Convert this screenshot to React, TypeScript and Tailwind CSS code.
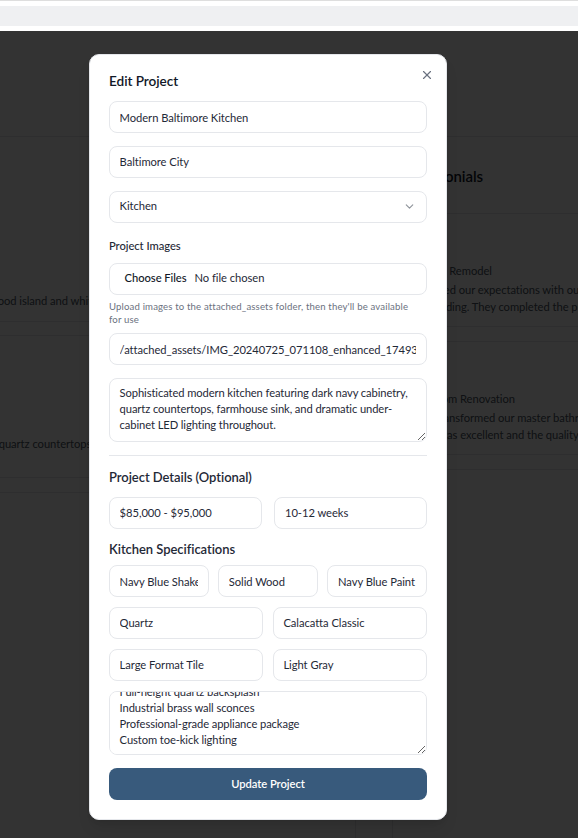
import { useEffect, useRef } from "react";
import { X, ChevronDown } from "lucide-react";

const FONT = "font-['Lato','Noto_Sans',sans-serif] tracking-[-0.05px]";
const inputCls =
  "block h-[32px] w-full rounded-[8px] border border-[#e5e7eb] bg-white px-[9.6px] text-[11.2px] text-[#1f2937] outline-none";
const areaCls =
  "block h-[64px] w-full rounded-[8px] border border-[#e5e7eb] bg-white px-[9.6px] py-[6.4px] text-[11.2px] leading-[16px] tracking-[-0.1px] text-[#1f2937] outline-none";

function Field({ value, className = "" }: { value: string; className?: string }) {
  return <input readOnly defaultValue={value} className={`${inputCls} ${className}`} />;
}

function Background() {
  return (
    <div className="relative h-[807px] overflow-hidden bg-white">
      <div className="h-[106px] border-b border-[#e5e7eb]" />
      <div className="flex">
        <div className="ml-[-54px] w-[410px] shrink-0">
          <div className="h-[185px] rounded-b-[8px] border border-t-0 border-[#e5e7eb] px-4">
            <div className="h-[156px]" />
            <p className="whitespace-nowrap text-[11.2px] text-[#4b5563]">
              Dark wood island and white oak cabinetry with brass hardware.
            </p>
          </div>
          <div className="mt-[13px] h-[143px] rounded-[8px] border border-[#e5e7eb] px-4">
            <div className="h-[100px]" />
            <p className="whitespace-nowrap text-[11.2px] text-[#4b5563]">
              Honed quartz countertops with a double vanity and heated floors.
            </p>
          </div>
          <div className="mt-[14px] h-[400px] rounded-[8px] border border-[#e5e7eb]" />
        </div>
        <div className="ml-[36px] w-[400px] shrink-0">
          <h2 className="mt-[32px] pl-[10px] text-[15px] font-semibold leading-none text-[#111827]">Testimonials</h2>
          <div className="mt-[29px] h-[114px] rounded-[8px] border border-[#e5e7eb] px-4 pt-[48px] text-[11.2px] leading-[17px] text-[#4b5563]">
            <p className="whitespace-nowrap">Kitchen Remodel</p>
            <p className="mt-[2px] whitespace-nowrap">Exceeded our expectations with our kitchen remodel.</p>
            <p className="whitespace-nowrap">outstanding. They completed the project on time.</p>
          </div>
          <div className="mt-[14px] h-[114px] rounded-[8px] border border-[#e5e7eb] px-4 pt-[48px] text-[11.2px] leading-[17px] text-[#4b5563]">
            <p className="whitespace-nowrap">Bathroom Renovation</p>
            <p className="mt-[2px] whitespace-nowrap">They transformed our master bathroom into a spa.</p>
            <p className="whitespace-nowrap">Work was excellent and the quality is superb.</p>
          </div>
          <div className="mt-[14px] h-[400px] rounded-[8px] border border-[#e5e7eb]" />
        </div>
      </div>
      <div className="absolute inset-0 bg-black/80" />
    </div>
  );
}

export default function App() {
  const specRef = useRef<HTMLTextAreaElement>(null);
  useEffect(() => {
    if (specRef.current) specRef.current.scrollTop = 10000;
  }, []);

  return (
    <div className={`relative h-[838px] w-[578px] overflow-hidden bg-white ${FONT}`}>
      <div className="h-[31px] border-t border-[#dedede] bg-white pt-[5px]">
        <div className="h-[20px] bg-[#eff0f2]" />
      </div>
      <Background />

      <div className="absolute left-[89px] top-[54px] w-[358px] rounded-[10px] border border-[#e5e7eb] bg-white px-[19px] pb-[19px] pt-[19px] shadow-lg">
        <button className="absolute right-[12px] top-[13px] text-[#6b7280]">
          <X size={14} strokeWidth={2} />
        </button>
        <h2 className="text-[13.6px] font-semibold leading-[15px] text-[#111827]">Edit Project</h2>

        <div className="mt-[12px] flex flex-col gap-[12.8px]">
          <Field value="Modern Baltimore Kitchen" />
          <Field value="Baltimore City" />
          <div className={`${inputCls} flex items-center justify-between`}>
            <span>Kitchen</span>
            <ChevronDown size={13} className="opacity-50" />
          </div>

          <div className="pt-[5px]">
            <div className="text-[11.2px] font-medium leading-none text-[#1f2937]">Project Images</div>
            <div className={`${inputCls} mt-[11px] flex items-center`}>
              <span className="pl-[5px] pr-[8px] font-medium text-[#111827]">Choose Files</span>
              <span>No file chosen</span>
            </div>
            <p className="mt-[6.5px] max-w-[310px] text-[9.6px] leading-[12.8px] tracking-[0.15px] text-[#6b7280]">
              Upload images to the attached_assets folder, then they'll be available for use
            </p>
            <Field className="mt-[6.5px]" value="/attached_assets/IMG_20240725_071108_enhanced_1749367" />
          </div>

          <textarea
            readOnly
            defaultValue="Sophisticated modern kitchen featuring dark navy cabinetry, quartz countertops, farmhouse sink, and dramatic under-cabinet LED lighting throughout."
            className={areaCls}
          />

          <div className="border-t border-[#e5e7eb] pt-[12.8px]">
            <h3 className="text-[13px] font-semibold leading-[16px] text-[#1f2937]">Project Details (Optional)</h3>
            <div className="mt-[12px] grid grid-cols-2 gap-[12.8px]">
              <Field value="$85,000 - $95,000" />
              <Field value="10-12 weeks" />
            </div>
          </div>

          <div>
            <h3 className="text-[13px] font-semibold leading-[16px] text-[#1f2937]">Kitchen Specifications</h3>
            <div className="mt-[8px] flex flex-col gap-[9.6px]">
              <div className="grid grid-cols-3 gap-[9.6px]">
                <Field value="Navy Blue Shaker" />
                <Field value="Solid Wood" />
                <Field value="Navy Blue Paint" />
              </div>
              <div className="grid grid-cols-2 gap-[9.6px]">
                <Field value="Quartz" />
                <Field value="Calacatta Classic" />
              </div>
              <div className="grid grid-cols-2 gap-[9.6px]">
                <Field value="Large Format Tile" />
                <Field value="Light Gray" />
              </div>
              <textarea
                ref={specRef}
                readOnly
                defaultValue={
                  "Custom island with seating\nUnder-cabinet LED lighting\nFarmhouse sink\nFull-height quartz backsplash\nIndustrial brass wall sconces\nProfessional-grade appliance package\nCustom toe-kick lighting"
                }
                className={`mt-[1px] ${areaCls}`}
              />
            </div>
          </div>

          <button className="h-[32px] w-full rounded-[8px] bg-[#385a7c] text-[11.2px] font-semibold text-white">
            Update Project
          </button>
        </div>
      </div>
    </div>
  );
}
